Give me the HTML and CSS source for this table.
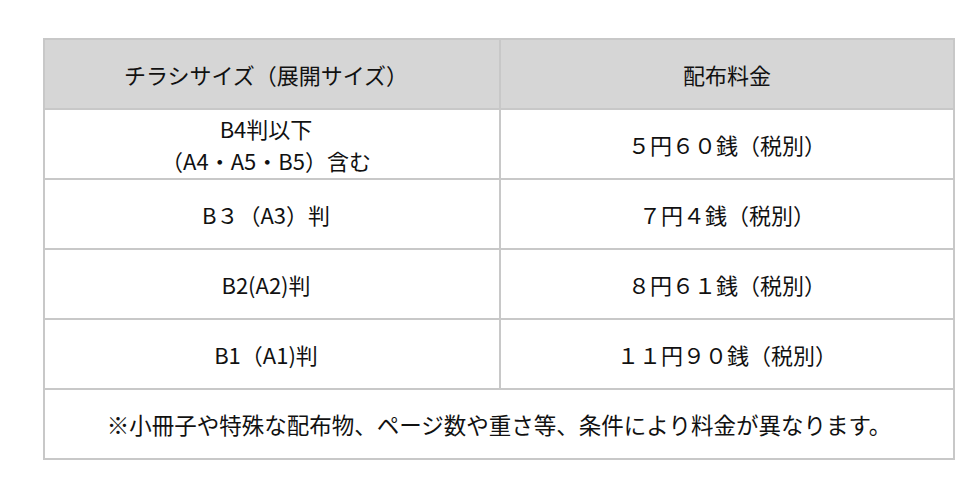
FILE: index.html
```html
<!DOCTYPE html>
<html lang="ja">
<head>
<meta charset="utf-8">
<link rel="stylesheet" href="styles.css">
</head>
<body>
<div class="wrap">
<table class="price">
  <colgroup><col class="col1"><col class="col2"></colgroup>
  <thead>
    <tr><th class="c1">チラシサイズ（展開サイズ）</th><th class="c2">配布料金</th></tr>
  </thead>
  <tbody>
    <tr><td class="c1">B4判以下<br>（A4・A5・B5）含む</td><td class="c2">５円６０銭（税別）</td></tr>
    <tr><td class="c1">B３（A3）判</td><td class="c2">７円４銭（税別）</td></tr>
    <tr><td class="c1">B2(A2)判</td><td class="c2">８円６１銭（税別）</td></tr>
    <tr><td class="c1">B1（A1)判</td><td class="c2">１１円９０銭（税別）</td></tr>
    <tr><td class="note" colspan="2">※小冊子や特殊な配布物、ページ数や重さ等、条件により料金が異なります。</td></tr>
  </tbody>
</table>
</div>
</body>
</html>
```
FILE: styles.css
```css
html, body {
  margin: 0;
  padding: 0;
  background: #ffffff;
}
body {
  font-family: "Noto Sans CJK JP", "Noto Sans", sans-serif;
  color: #111111;
}
.wrap {
  padding: 38px 0 0 43px;
}
.price {
  width: 912px;
  border-collapse: collapse;
  table-layout: fixed;
  border: 1px solid #b8b8b8;
}
.col1 {
  width: 456px;
}
.price th,
.price td {
  height: 68px;
  padding: 0;
  text-align: center;
  vertical-align: middle;
  font-size: 22px;
  font-weight: 400;
  line-height: 32px;
  border: 2px solid #c8c8c8;
}
.price thead th {
  background: #d6d6d6;
}
.price .c1 {
  padding-right: 12px;
}
.price .note {
  font-size: 22.5px;
}
```
